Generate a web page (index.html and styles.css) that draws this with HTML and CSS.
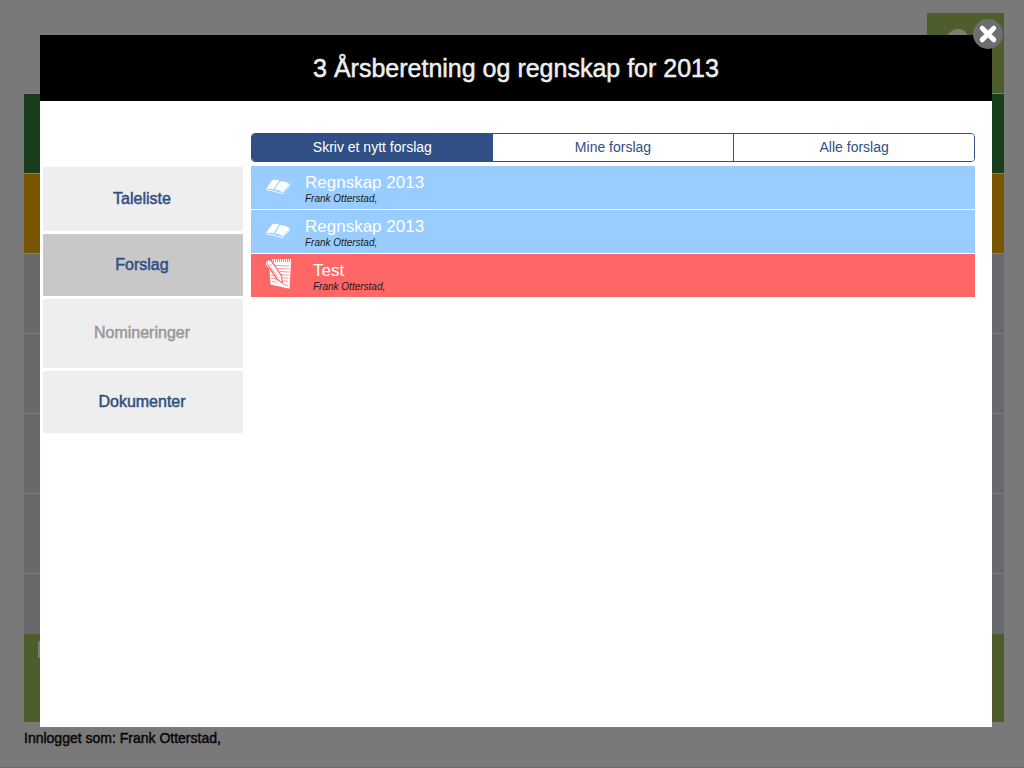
FILE: index.html
```html
<!DOCTYPE html>
<html lang="no">
<head>
<meta charset="utf-8">
<meta name="viewport" content="width=device-width, initial-scale=1">
<title>Årsberetning og regnskap</title>
<link rel="stylesheet" href="styles.css">
</head>
<body>
<div class="page">
  <header class="page-head">
    <div class="user-tile">
      <svg class="user-icon" viewBox="0 0 60 60" aria-hidden="true"><path d="M11 20 C15 12 29 7 33 20 L35 34 H8 Z" fill="#7b7d78"/></svg>
    </div>
  </header>
  <div class="agenda">
    <div class="agenda-row green"></div>
    <div class="agenda-row amber"></div>
    <div class="agenda-row"></div>
    <div class="agenda-row"></div>
    <div class="agenda-row"></div>
    <div class="agenda-row"></div>
    <div class="agenda-row short"></div>
  </div>
  <div class="info-bar"><div class="info-field"></div></div>
  <footer class="login">Innlogget som: Frank Otterstad,</footer>
</div>

<div class="dialog" role="dialog" aria-labelledby="dialog-title">
  <button class="close" type="button" aria-label="Lukk">
    <svg viewBox="0 0 30 30" aria-hidden="true"><circle cx="15" cy="15" r="15" fill="#6e6e6e"/><path d="M9.200 9.200 L20.800 20.800 M20.800 9.200 L9.200 20.800" stroke="#fff" stroke-width="5" stroke-linecap="round"/></svg>
  </button>
  <h1 class="dialog-head" id="dialog-title">3 Årsberetning og regnskap for 2013</h1>
  <div class="dialog-body">
    <nav class="side">
      <button class="side-item first" type="button">Taleliste</button>
      <button class="side-item active" type="button">Forslag</button>
      <button class="side-item tall" type="button" disabled>Nomineringer</button>
      <button class="side-item" type="button">Dokumenter</button>
    </nav>
    <main class="content">
      <div class="tabs">
        <button class="tab selected" type="button">Skriv et nytt forslag</button>
        <button class="tab" type="button">Mine forslag</button>
        <button class="tab" type="button">Alle forslag</button>
      </div>
      <ul class="list">
        <li class="item">
          <svg class="item-icon" viewBox="0 0 26 34" aria-hidden="true"><use href="#book"/></svg>
          <div class="item-text"><span class="item-title">Regnskap 2013</span><span class="item-sub">Frank Otterstad,</span></div>
        </li>
        <li class="item">
          <svg class="item-icon" viewBox="0 0 26 34" aria-hidden="true"><use href="#book"/></svg>
          <div class="item-text"><span class="item-title">Regnskap 2013</span><span class="item-sub">Frank Otterstad,</span></div>
        </li>
        <li class="item red">
          <svg class="item-icon" viewBox="0 0 26 34" aria-hidden="true">
            <path d="M3 4 L25 4 L23.500 30.700 L4.500 26.500 Z" fill="#fff"/>
            <path d="M6 2.500 H25" stroke="#fff" stroke-width="3" stroke-dasharray="1.200 .8"/>
            <path d="M10 7.500 L23.500 8 M12 10.500 L23 11 M14 13.500 L23 14 M15 16.500 L23 17.500 M17 19.500 L22.500 20.500 M5 17 L8.500 17.500 M5 20 L10 21 M5.500 23 L11 24.300 M18 22.500 L22 23.500 M17 26.500 L22 27.500" stroke="#ff8c8c" stroke-width=".9"/>
            <path d="M.8 5.500 C.5 2.500 4 1 6 3.500 L15.500 18 L16.500 25 L10.800 21.200 Z" fill="#fff" stroke="#ff6666" stroke-width="1.300"/>
            <path d="M2 8.500 L7 5.300 M4.800 9.500 L12.500 20.500" stroke="#ff7777" stroke-width=".8"/>
            <path d="M3 9.500 C-.5 8 -.5 3.500 3 2.200" fill="none" stroke="#fff" stroke-width="1"/>
          </svg>
          <div class="item-text"><span class="item-title">Test</span><span class="item-sub">Frank Otterstad,</span></div>
        </li>
      </ul>
    </main>
  </div>
</div>

<svg class="symbols" aria-hidden="true">
  <symbol id="book" viewBox="0 0 26 34">
    <path d="M0 19 C2.500 16.500 4 12 6.700 10 C9 9.700 11.500 9.600 13.500 10.500 C11 13 9.500 17 7.300 19.200 C5 18.500 2.500 18.800 0 19 Z" fill="#fff"/>
    <path d="M8.500 19.500 C10.800 17 12 13 14.700 11 C18 11.500 21.500 12 24 14.500 L16.300 22.500 C14 20.500 11.500 19.500 8.500 19.500 Z" fill="#fff"/>
    <path d="M0 19.800 L7.500 21 L16.300 23.800 L23.800 16" fill="none" stroke="#fff" stroke-width=".9"/>
  </symbol>
</svg>
</body>
</html>
```
FILE: styles.css
```css
* {
  box-sizing: border-box;
}

body {
  margin: 0;
  min-height: 100vh;
  background: #797979;
  font-family: "Liberation Sans", Arial, sans-serif;
}

button {
  margin: 0;
  padding: 0;
  border: 0;
  font: inherit;
}

.symbols {
  position: absolute;
  width: 0;
  height: 0;
}

.page {
  min-height: 100vh;
  padding: 13px 20px 0 24px;
  border-bottom: 1px solid #6c6a6c;
}

.page-head {
  display: flex;
  justify-content: flex-end;
  border-bottom: 1px solid #7e7f80;
}

.user-tile {
  width: 77px;
  height: 80px;
  padding: 4px 8px;
  background: #4d5e2c;
}

.user-icon {
  display: block;
  width: 60px;
  height: 60px;
}

.agenda-row {
  height: 80px;
  background: #68696d;
  border-bottom: 1px solid #7e7f80;
}

.agenda-row.green {
  background: #173d1c;
}

.agenda-row.amber {
  background: #785500;
}

.agenda-row.short {
  height: 60px;
  border-bottom: 0;
}

.info-bar {
  height: 88px;
  padding: 7px 14px;
  background: #4d5e2c;
}

.info-field {
  height: 17px;
  background: #7b7d78;
}

.login {
  padding-top: 8px;
  font-size: 14px;
  line-height: 16px;
  color: #0a0a0a;
  -webkit-text-stroke: 0.5px #0a0a0a;
}

.dialog {
  position: fixed;
  inset: 35px 32px 41px 40px;
  background: #fff;
}

.close {
  position: absolute;
  top: -16px;
  right: -11px;
  width: 30px;
  height: 30px;
  background: none;
}

.close svg {
  display: block;
}

.dialog-head {
  margin: 0;
  background: #000;
  color: #eee;
  font-size: 25px;
  font-weight: normal;
  line-height: 66px;
  text-align: center;
  -webkit-text-stroke: 0.5px #eee;
}

.dialog-body {
  display: grid;
  grid-template-columns: 200px 1fr;
  gap: 8px;
  padding: 32px 17px 0 3px;
}

.side {
  display: flex;
  flex-direction: column;
  gap: 3px;
  padding-top: 34px;
}

.side-item {
  height: 62px;
  padding: 0 2px 1px 0;
  background: #eee;
  color: #304f84;
  font-size: 16px;
  -webkit-text-stroke: 0.5px;
}

.side-item.first {
  height: 64px;
}

.side-item.active {
  background: #c8c8c8;
}

.side-item.tall {
  height: 69px;
  color: #999;
}

.tabs {
  display: grid;
  grid-template-columns: repeat(3, 1fr);
  height: 29px;
  border: 1px solid #304f84;
  border-radius: 4px;
  overflow: hidden;
}

.tab {
  padding-bottom: 2px;
  background: #fff;
  color: #304f84;
  font-size: 14px;
}

.tab + .tab {
  border-left: 1px solid #304f84;
}

.tab.selected {
  background: #304f84;
  color: #fff;
}

.tab.selected + .tab {
  border-left: 0;
}

.list {
  display: flex;
  flex-direction: column;
  gap: 1px;
  margin: 4px 0 0;
  padding: 0;
  list-style: none;
}

.item {
  display: flex;
  align-items: flex-start;
  gap: 13px;
  height: 43px;
  padding: 4px 15px;
  background: #99ccff;
}

.item.red {
  gap: 21px;
  background: #ff6666;
}

.item-icon {
  flex: none;
  width: 26px;
  height: 34px;
}

.item-text {
  display: flex;
  flex-direction: column;
  padding-top: 3px;
}

.item-title {
  color: #fff;
  font-size: 17px;
  line-height: 20px;
}

.item-sub {
  color: #1a1a1a;
  font-size: 10px;
  font-style: italic;
  line-height: 12px;
}
```
